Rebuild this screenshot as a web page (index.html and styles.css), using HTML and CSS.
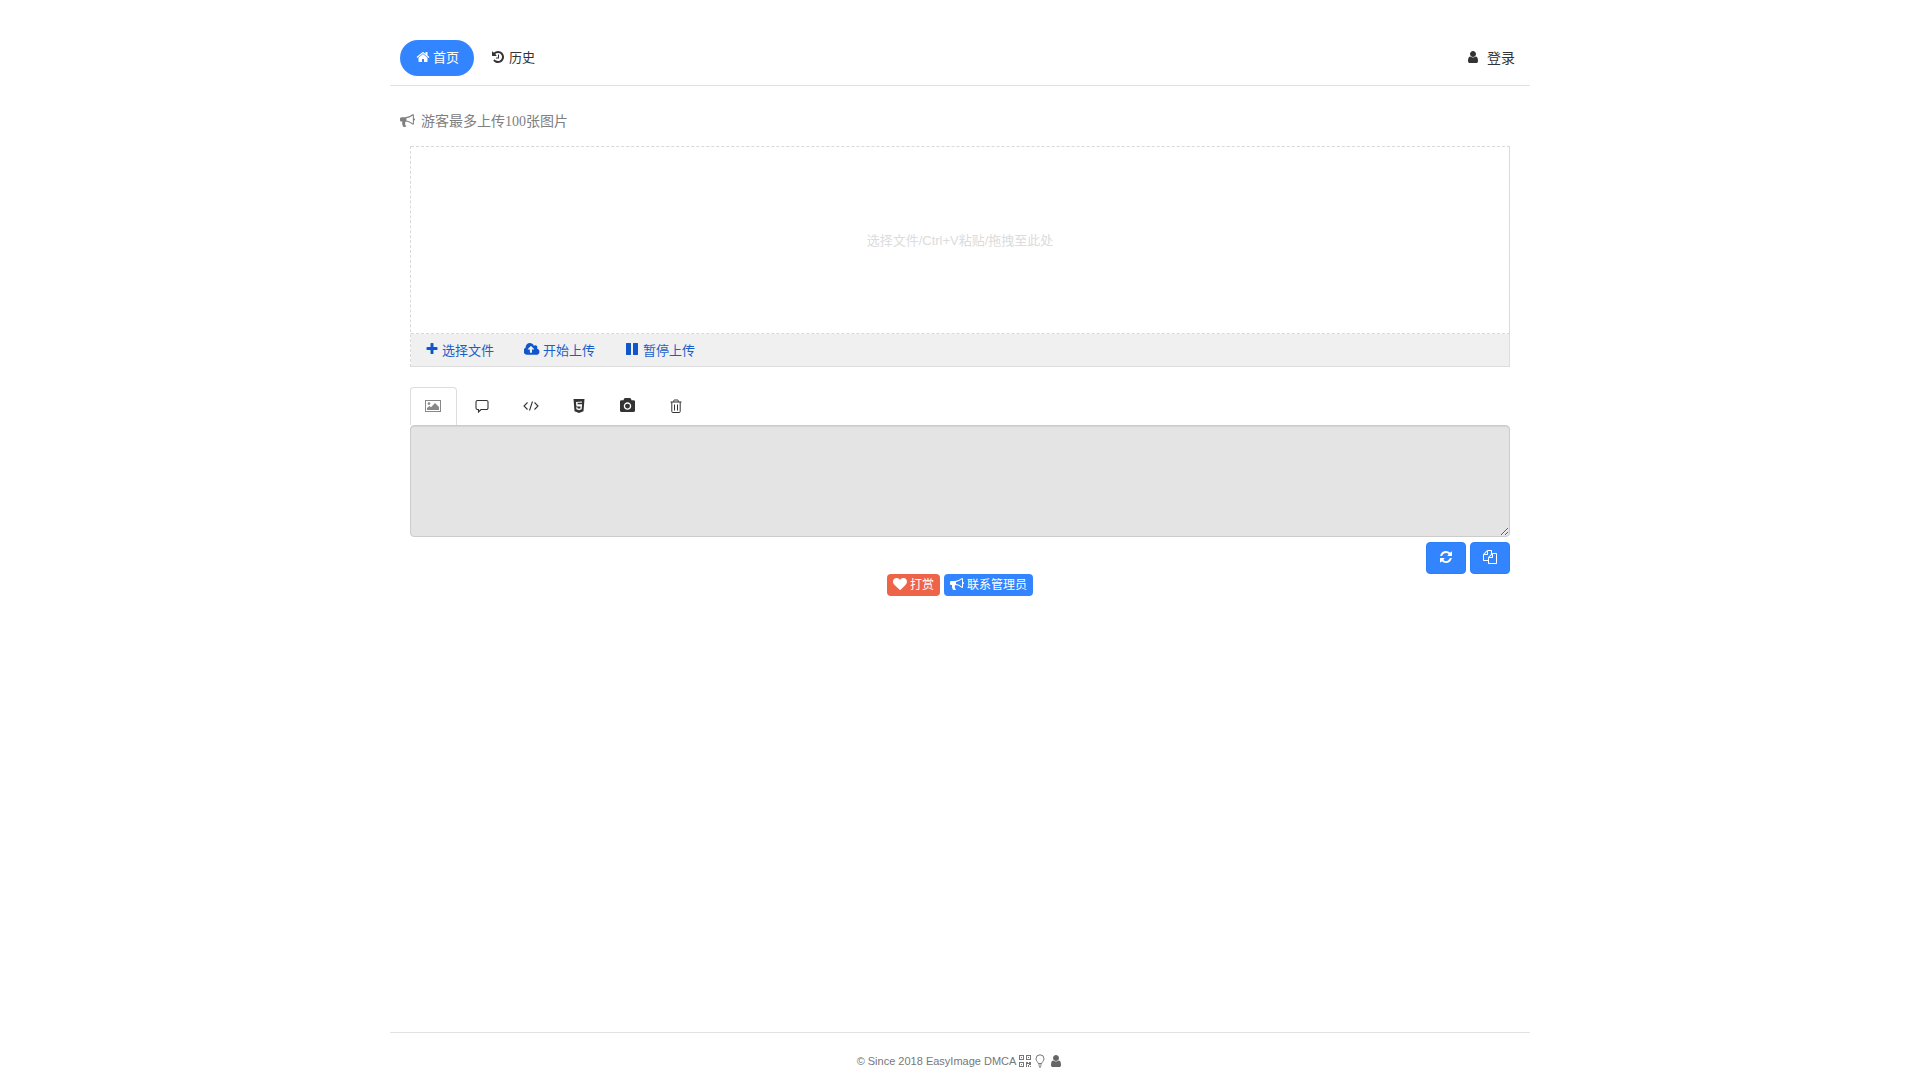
FILE: index.html
```html
<!DOCTYPE html>
<html lang="zh">
<head>
<meta charset="utf-8">
<title>EasyImage</title>
<link rel="stylesheet" href="styles.css">
</head>
<body>
<div class="page">
  <nav class="nav">
    <a class="nav-link active"><svg class="ic" viewBox="0 0 1792 1792"><path d="M1472 992v480q0 26-19 45t-45 19h-384v-384h-256v384h-384q-26 0-45-19t-19-45v-480q0-1 .5-3t.5-3l575-474 575 474q1 2 1 6zm223-69l-62 74q-8 9-21 11h-3q-13 0-21-7l-692-577-692 577q-12 8-24 7-13-2-21-11l-62-74q-8-10-7-23.5t11-21.5l719-599q32-26 76-26t76 26l244 204v-195q0-14 9-23t23-9h192q14 0 23 9t9 23v408l219 182q10 8 11 21.5t-7 23.5z"/></svg>首页</a>
    <a class="nav-link"><svg class="ic" viewBox="0 0 1792 1792"><path d="M1664 896q0 156-61 298t-164 245-245 164-298 61q-172 0-327-72.5t-264-204.5q-7-10-6.5-22.5t8.5-20.5l137-138q10-9 25-9 16 2 23 12 73 95 179 147t225 52q104 0 198.5-40.5t163.5-109.5 109.5-163.5 40.5-198.5-40.5-198.5-109.5-163.5-163.5-109.5-198.5-40.5q-98 0-188 35.5t-160 101.5l137 138q31 30 14 69-17 40-59 40h-448q-26 0-45-19t-19-45v-448q0-42 40-59 39-17 69 14l130 129q107-101 244.5-156.5t284.5-55.5q156 0 298 61t245 164 164 245 61 298zm-640-288v448q0 14-9 23t-23 9h-320q-14 0-23-9t-9-23v-64q0-14 9-23t23-9h224v-352q0-14 9-23t23-9h64q14 0 23 9t9 23z"/></svg>历史</a>
    <a class="nav-link login"><svg class="ic" viewBox="0 0 1792 1792"><path d="M1536 1399q0 109-62.5 187t-150.5 78h-854q-88 0-150.5-78t-62.5-187q0-85 8.5-160.5t31.5-152 58.5-131 94-89 134.5-34.5q131 128 313 128t313-128q76 0 134.5 34.5t94 89 58.5 131 31.5 152 8.5 160.5zm-256-887q0 159-112.5 271.5t-271.5 112.5-271.5-112.5-112.5-271.5 112.5-271.5 271.5-112.5 271.5 112.5 112.5 271.5z"/></svg>登录</a>
  </nav>

  <p class="notice"><svg class="ic" viewBox="0 0 1792 1792"><path d="M1664 640q53 0 90.5 37.5t37.5 90.5-37.5 90.5-90.5 37.5v384q0 52-38 90t-90 38q-417-347-812-380-58 19-91 66t-31 100.5 40 92.5q-20 33-23 65.5t6 58 33.5 55 48 50 61.5 50.5q-29 58-111.5 83t-168.5 11.5-132-55.5q-7-23-29.5-87.5t-32-94.5-23-89-15-101 3.5-98.5 22-110.5h-122q-66 0-113-47t-47-113v-192q0-66 47-113t113-47h480q435 0 896-384 52 0 90 38t38 90v384zm-128 604v-954q-394 302-768 343v270q377 42 768 341z"/></svg>游客最多上传100张图片</p>

  <main class="main">
    <section class="uploader">
      <div class="drop">选择文件/Ctrl+V粘贴/拖拽至此处</div>
      <div class="toolbar">
        <a class="tool"><svg class="ic" viewBox="0 0 1792 1792"><path d="M1600 736v192q0 40-28 68t-68 28h-416v416q0 40-28 68t-68 28h-192q-40 0-68-28t-28-68v-416h-416q-40 0-68-28t-28-68v-192q0-40 28-68t68-28h416v-416q0-40 28-68t68-28h192q40 0 68 28t28 68v416h416q40 0 68 28t28 68z"/></svg>选择文件</a>
        <a class="tool"><svg class="ic" viewBox="0 0 1920 1792"><path d="M1216 864q0-14-9-23l-352-352q-9-9-23-9t-23 9l-351 351q-10 12-10 24 0 14 9 23t23 9h224v352q0 13 9.5 22.5t22.5 9.5h192q13 0 22.5-9.5t9.5-22.5v-352h224q13 0 22.5-9.5t9.5-22.5zm640 288q0 159-112.5 271.5t-271.5 112.5h-1088q-185 0-316.5-131.5t-131.5-316.5q0-130 70-240t188-165q-2-30-2-43 0-212 150-362t362-150q156 0 285.5 87t188.5 231q71-62 166-62 106 0 181 75t75 181q0 76-41 138 130 31 213.5 135.5t83.5 238.5z"/></svg>开始上传</a>
        <a class="tool"><svg class="ic" viewBox="0 0 1792 1792"><path d="M1664 192v1408q0 26-19 45t-45 19h-512q-26 0-45-19t-19-45v-1408q0-26 19-45t45-19h512q26 0 45 19t19 45zm-896 0v1408q0 26-19 45t-45 19h-512q-26 0-45-19t-19-45v-1408q0-26 19-45t45-19h512q26 0 45 19t19 45z"/></svg>暂停上传</a>
      </div>
    </section>

    <div class="tabs">
      <a class="tab current"><svg class="tab-ic" viewBox="0 0 16 14"><rect x=".5" y="1.500" width="15" height="11" fill="none" stroke="currentColor"/><circle cx="4" cy="4.600" r="1.300"/><path d="M2 11V9l2.500-2 1.500 1.200L10 4l4 4v3z"/></svg></a>
      <a class="tab"><svg class="tab-ic" viewBox="0 0 16 14"><path d="M3.500 1.500h9A1.500 1.500 0 0 1 14 3v6a1.500 1.500 0 0 1-1.500 1.500H7L4.500 13v-2.500h-1A1.500 1.500 0 0 1 2 9V3a1.500 1.500 0 0 1 1.500-1.500z" fill="none" stroke="currentColor" stroke-width="1.100"/></svg></a>
      <a class="tab"><svg class="tab-ic" viewBox="0 0 16 14"><path d="M4.500 3.500L1 7l3.500 3.500M11.500 3.500L15 7l-3.500 3.500M9.500 2.500L6.500 11.500" fill="none" stroke="currentColor" stroke-width="1.100"/></svg></a>
      <a class="tab"><svg class="tab-ic" viewBox="0 0 16 14"><path fill-rule="evenodd" d="M2.500 0h11l-1 12.300L8 14l-4.500-1.700zM5 3l.4 4.500h4.100l-.1 1.700-1.400.5-1.400-.5-.1-1h-1.300l.2 2 2.600 1 2.600-1 .5-5H6.600l-.1-1.400h4.300l.1-1.300z"/></svg></a>
      <a class="tab"><svg class="tab-ic wide" viewBox="0 0 1792 1792"><path d="M896 672q119 0 203.500 84.500t84.500 203.500-84.500 203.500-203.500 84.500-203.500-84.500-84.500-203.500 84.500-203.500 203.500-84.500zm704-416q106 0 181 75t75 181v896q0 106-75 181t-181 75h-1408q-106 0-181-75t-75-181v-896q0-106 75-181t181-75h224l51-136q19-49 69.500-84.500t103.500-35.500h512q53 0 103.500 35.500t69.500 84.500l51 136h224zm-704 1152q185 0 316.500-131.500t131.500-316.500-131.500-316.500-316.500-131.500-316.500 131.500-131.500 316.500 131.500 316.500 316.500 131.500z"/></svg></a>
      <a class="tab"><svg class="tab-ic" viewBox="0 0 16 14"><path d="M2.500 3h11M5.800 3V1.500a.5.500 0 0 1 .5-.5h3.400a.5.500 0 0 1 .5.500V3M3.800 3v9.500a1 1 0 0 0 1 1h6.400a1 1 0 0 0 1-1V3M6.500 5.500v6M9.500 5.500v6" fill="none" stroke="currentColor"/></svg></a>
    </div>

    <textarea class="output" readonly></textarea>

    <div class="actions">
      <button class="btn" type="button"><svg class="ic" viewBox="0 0 1792 1792"><path d="M1639 1056q0 5-1 7-64 268-268 434.500t-478 166.500q-146 0-282.500-55t-243.500-157l-129 129q-19 19-45 19t-45-19-19-45v-448q0-26 19-45t45-19h448q26 0 45 19t19 45-19 45l-137 137q71 66 161 102t187 36q134 0 250-65t186-179q11-17 53-117 8-23 30-23h192q13 0 22.500 9.500t9.500 22.500zm25-800v448q0 26-19 45t-45 19h-448q-26 0-45-19t-19-45 19-45l138-138q-148-137-349-137-134 0-250 65t-186 179q-11 17-53 117-8 23-30 23h-199q-13 0-22.500-9.500t-9.500-22.500v-7q65-268 270-434.500t480-166.500q146 0 284 55.500t245 156.500l130-129q19-19 45-19t45 19 19 45z"/></svg></button>
      <button class="btn" type="button"><svg class="ic" viewBox="0 0 1792 1792"><path d="M1696 384q40 0 68 28t28 68v1216q0 40-28 68t-68 28h-960q-40 0-68-28t-28-68v-288h-544q-40 0-68-28t-28-68v-672q0-40 20-88t48-76l408-408q28-28 76-48t88-20h416q40 0 68 28t28 68v328q68-40 128-40h416zm-544 213l-299 299h299v-299zm-640-384l-299 299h299v-299zm196 647l316-316v-416h-384v416q0 40-28 68t-68 28h-416v640h512v-256q0-40 20-88t48-76zm956 804v-1152h-384v416q0 40-28 68t-68 28h-416v640h896z"/></svg></button>
    </div>

    <div class="badges">
      <a class="badge red"><svg class="ic" viewBox="0 0 1792 1792"><path d="M896 1664q-26 0-44-18l-624-602q-10-8-27.500-26t-55.500-65.500-68-97.500-53.500-121-23.500-138q0-220 127-344t351-124q62 0 126.500 21.500t120 58 95.500 68.500 76 68q36-36 76-68t95.500-68.500 120-58 126.500-21.500q224 0 351 124t127 344q0 221-229 450l-623 603q-18 18-44 18z"/></svg>打赏</a>
      <a class="badge blue"><svg class="ic" viewBox="0 0 1792 1792"><path d="M1664 640q53 0 90.500 37.500t37.500 90.500-37.500 90.500-90.500 37.500v384q0 52-38 90t-90 38q-417-347-812-380-58 19-91 66t-31 100.500 40 92.500q-20 33-23 65.500t6 58 33.500 55 48 50 61.500 50.500q-29 58-111.500 83t-168.500 11.500-132-55.500q-7-23-29.500-87.500t-32-94.500-23-89-15-101 3.500-98.500 22-110.500h-122q-66 0-113-47t-47-113v-192q0-66 47-113t113-47h480q435 0 896-384 52 0 90 38t38 90v384zm-128 604v-954q-394 302-768 343v270q377 42 768 341z"/></svg>联系管理员</a>
    </div>
  </main>

  <footer class="footer">
    <span>© Since 2018 EasyImage DMCA</span>
    <svg class="foot-ic" viewBox="0 0 12 12"><path fill-rule="evenodd" d="M0 0h5v5H0zM1 1v3h3V1zM7 0h5v5H7zM8 1v3h3V1zM0 7h5v5H0zM1 8v3h3V8zM2 2h1v1H2zM9 2h1v1H9zM2 9h1v1H2zM7 7h2v1h1V7h2v3h-2V9H8v3H7zM9 10h1v2H9zM11 11h1v1h-1z"/></svg>
    <svg class="foot-ic bulb" viewBox="0 0 10 14"><path d="M3.300 9.500C3 7.800 1 7 1 4.800a4 4 0 0 1 8 0C9 7 7 7.800 6.700 9.500z" fill="none" stroke="currentColor"/><path d="M3.300 10.500h3.400v1H3.300zM4 12.300h2V13.500H4z"/></svg>
    <svg class="foot-ic user" viewBox="0 0 1792 1792"><path d="M1536 1399q0 109-62.500 187t-150.500 78h-854q-88 0-150.500-78t-62.500-187q0-85 8.500-160.500t31.500-152 58.500-131 94-89 134.500-34.500q131 128 313 128t313-128q76 0 134.500 34.500t94 89 58.500 131 31.500 152 8.500 160.500zm-256-887q0 159-112.500 271.500t-271.500 112.500-271.500-112.500-112.500-271.500 112.500-271.500 271.500-112.500 271.500 112.500 112.500 271.500z"/></svg>
  </footer>
</div>
</body>
</html>
```
FILE: styles.css
```css
* { box-sizing: border-box; }
html, body { margin: 0; height: 100%; }
body {
  font-family: "Liberation Serif", "Noto Sans CJK SC", serif;
  color: #333;
  background: #fff;
  overflow: hidden;
}
.page {
  width: 1140px;
  height: 1080px;
  margin: 0 auto;
  display: flex;
  flex-direction: column;
}
.ic { fill: currentColor; width: 14px; height: 14px; flex: none; }

.nav {
  display: flex;
  align-items: center;
  gap: 2px;
  margin-top: 40px;
  padding: 0 0 9px 10px;
  border-bottom: 1px solid #e2e2e2;
  height: 46px;
}
.nav-link {
  display: flex;
  align-items: center;
  gap: 4px;
  height: 36px;
  padding: 0 15px 3px;
  font-size: 13px;
  color: #333;
  font-family: "Liberation Sans", "Noto Sans CJK SC", sans-serif;
  border-radius: 18px;
}
.nav-link.active { background: #3385ff; color: #fff; padding-left: 16px; gap: 3px; }
.nav-link.login { margin-left: auto; font-size: 14px; gap: 7px; }

.notice {
  margin: 24px 0 0;
  padding-left: 10px;
  display: flex;
  align-items: center;
  gap: 6px;
  height: 20px;
  font-size: 14px;
  color: #808080;
}
.notice .ic { width: 15px; height: 15px; }

.main { padding: 0 20px; margin-top: 16px; }
.uploader {
  border: 1px solid #ddd;
  border-top: 0;
  border-left: 1px dashed #d9d9d9;
}
.drop {
  height: 188px;
  padding-bottom: 2px;
  border: 1px dashed #d9d9d9;
  border-width: 1px 1px 1px 0;
  margin-right: -1px;
  display: flex;
  align-items: center;
  justify-content: center;
  font-family: "Liberation Sans", "Noto Sans CJK SC", sans-serif;
  font-size: 13px;
  color: #dcdcdc;
}
.toolbar {
  display: flex;
  align-items: center;
  gap: 30px;
  height: 32px;
  padding: 0 0 2px 14px;
  background: #f0f0f0;
}
.tool {
  display: flex;
  align-items: center;
  gap: 3px;
  font-size: 13px;
  color: #1a5fc8;
  font-family: "Liberation Sans", "Noto Sans CJK SC", sans-serif;
}
.tool .ic { color: #0f57ca; }
.tool:nth-child(2) .ic { width: 16px; height: 15px; }
.tool:nth-child(3) { gap: 4px; }

.tabs { display: flex; gap: 2px; margin-top: 20px; height: 38px; }
.tab {
  width: 46.5px;
  height: 38px;
  display: flex;
  align-items: center;
  justify-content: center;
  padding-bottom: 2px;
  color: #333;
  border: 1px solid transparent;
  border-bottom: 0;
  border-radius: 4px 4px 0 0;
}
.tab.current { color: #888; border-color: #ddd; background: #fff; margin-right: .5px; }
.tab-ic { width: 16px; height: 14px; fill: currentColor; flex: none; }
.tab-ic.wide { width: 15px; height: 15px; }

.output {
  display: block;
  width: 100%;
  height: 112px;
  margin: 0;
  padding: 6px 12px;
  background: #e4e4e4;
  border: 1px solid #ccc;
  border-radius: 4px;
  box-shadow: inset 0 1px 1px rgba(0,0,0,.075);
  outline: 0;
}

.actions { display: flex; justify-content: flex-end; gap: 4px; margin-top: 5px; }
.btn {
  width: 40px;
  height: 32px;
  padding: 0 0 2px;
  display: flex;
  align-items: center;
  justify-content: center;
  background: #3385ff;
  color: #fff;
  border: 1px solid #2d7ff5;
  border-radius: 4px;
}
.btn .ic { width: 14px; height: 14px; }

.badges { display: flex; justify-content: center; gap: 4px; }
.badge {
  display: flex;
  align-items: center;
  gap: 3px;
  height: 22px;
  padding: 0 6px 3px;
  font-size: 12px;
  color: #fff;
  border-radius: 4px;
  font-family: "Liberation Sans", "Noto Sans CJK SC", sans-serif;
}
.badge.red { background: #ee6449; }
.badge.blue { background: #3385ff; }

.footer {
  margin-top: auto;
  height: 48px;
  border-top: 1px solid #e2e2e2;
  display: flex;
  justify-content: center;
  align-items: center;
  gap: 3px;
  padding-top: 8px;
  font-family: "Liberation Sans", "Noto Sans CJK SC", sans-serif;
  font-size: 11px;
  color: #777;
}
.foot-ic { width: 12px; height: 12px; fill: currentColor; }
.foot-ic.bulb { width: 10px; height: 14px; margin-left: 1px; }
.foot-ic.user { width: 14px; height: 14px; margin-left: 1px; color: #666; }
```
